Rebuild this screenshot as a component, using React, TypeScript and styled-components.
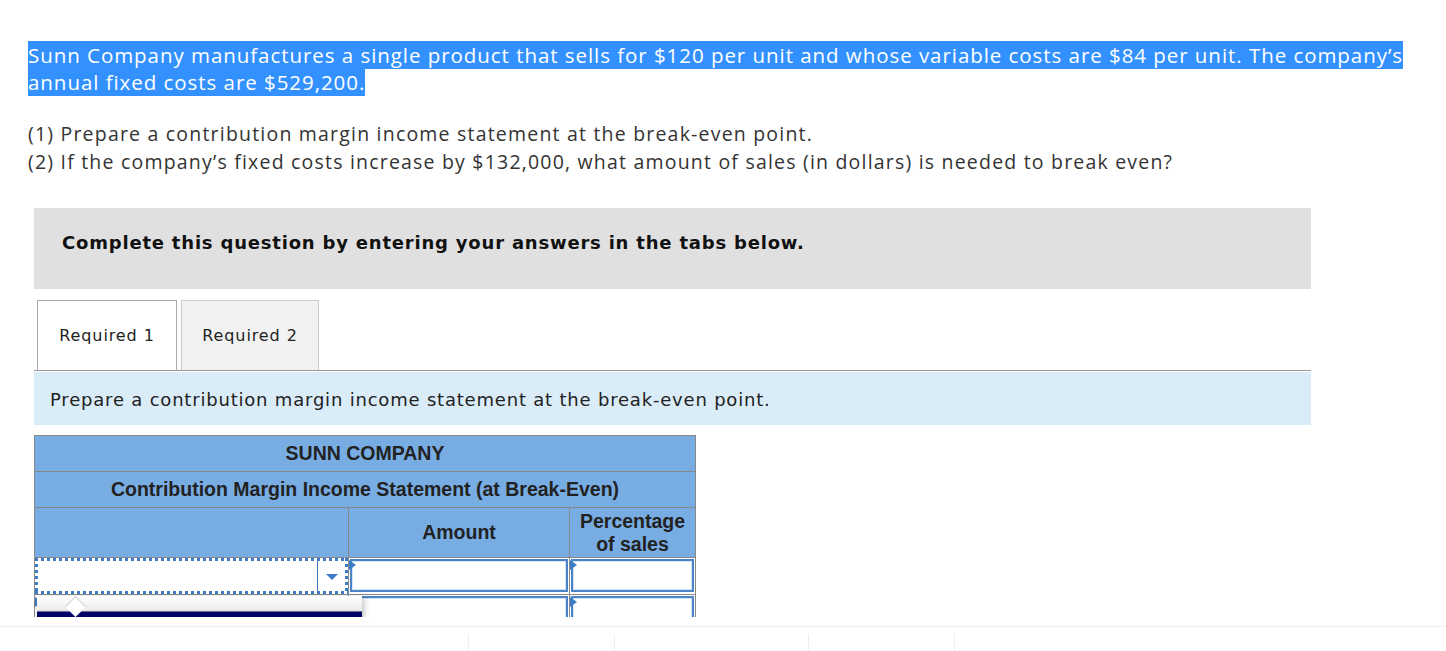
import React from 'react';
import styled, { createGlobalStyle } from 'styled-components';

const GlobalStyle = createGlobalStyle`
  html, body {
    margin: 0;
    padding: 0;
    background: #fff;
  }
`;

const Page = styled.div`
  width: 1446px;
  height: 651px;
  display: flex;
  flex-direction: column;
  overflow: hidden;
`;

const Scroller = styled.div`
  height: 617px;
  overflow: hidden;
  padding: 42px 0 0 28px;
  box-sizing: border-box;
`;

const Question = styled.p`
  margin: 0;
  font-family: 'Open Sans', 'Liberation Sans', sans-serif;
  font-size: 20.5px;
  letter-spacing: 0.95px;
  line-height: 26.5px;
  color: #fff;
  white-space: nowrap;
`;

const Selected = styled.span`
  background: #3391ff;
`;

const Parts = styled.div`
  margin-top: 25px;
  font-family: 'Open Sans', 'Liberation Sans', sans-serif;
  font-size: 19.5px;
  letter-spacing: 1.2px;
  line-height: 28px;
  color: #333;
  white-space: nowrap;
`;

const Notice = styled.div`
  margin: 32px 0 0 6px;
  width: 1277px;
  height: 81px;
  background: #e0e0e0;
  display: flex;
  align-items: center;
  padding: 0 0 12px 28px;
  box-sizing: border-box;
  font-family: 'DejaVu Sans', Verdana, sans-serif;
  font-weight: bold;
  font-size: 18px;
  letter-spacing: 0.8px;
  color: #111;
`;

const TabBar = styled.div`
  margin: 11px 0 0 6px;
  width: 1277px;
  height: 71px;
  display: flex;
  gap: 4px;
  padding-left: 3px;
  box-sizing: border-box;
  border-bottom: 1px solid #999;
`;

const Tab = styled.div<{ $active?: boolean }>`
  width: ${({ $active }) => ($active ? '140px' : '138px')};
  height: 70px;
  box-sizing: border-box;
  border: 1px solid ${({ $active }) => ($active ? '#aaa' : '#ccc')};
  border-bottom: none;
  background: ${({ $active }) => ($active ? '#fff' : '#f2f2f2')};
  display: flex;
  align-items: center;
  justify-content: center;
  font-family: 'DejaVu Sans', Verdana, sans-serif;
  font-size: 16px;
  letter-spacing: 0.9px;
  color: #222;
`;

const Instruction = styled.div`
  margin: 1px 0 0 6px;
  width: 1277px;
  height: 53px;
  background: #dbecf9;
  display: flex;
  align-items: center;
  padding: 2px 0 0 16px;
  box-sizing: border-box;
  font-family: 'DejaVu Sans', Verdana, sans-serif;
  font-size: 18px;
  letter-spacing: 0.8px;
  color: #222;
`;

const Sheet = styled.table`
  margin: 10px 0 0 6px;
  width: 661px;
  border-collapse: collapse;
  table-layout: fixed;
  font-family: 'Liberation Sans', Arial, sans-serif;
`;

const HeadCell = styled.td<{ $h: number }>`
  height: ${({ $h }) => $h}px;
  padding: 0;
  border: 1px solid #888;
  background: #78ade4;
  text-align: center;
  font-weight: bold;
  font-size: 19.5px;
  line-height: 23px;
  color: #222;
`;

const BodyCell = styled.td`
  height: 36px;
  padding: 1px;
  border: 1px solid #888;
  background: #fff;
  position: relative;
  box-sizing: border-box;
  vertical-align: top;
`;

const Marker = styled.span`
  position: absolute;
  top: 2px;
  left: 0;
  width: 0;
  height: 0;
  border-top: 5px solid transparent;
  border-bottom: 5px solid transparent;
  border-left: 7px solid #3d7cc6;
  z-index: 2;
`;

const Field = styled.div`
  height: 33px;
  box-sizing: border-box;
  border: 2px solid #4a84c6;
  box-shadow: inset 0 0 0 1px #d5e4f4;
  background: #fff;
`;

const Select = styled.div`
  height: 36px;
  margin: -1px;
  box-sizing: border-box;
  padding: 3px;
  display: flex;
  background:
    repeating-linear-gradient(90deg, #3d7cc6 0 3px, transparent 3px 6px) top left / 100% 3px no-repeat,
    repeating-linear-gradient(90deg, #3d7cc6 0 3px, transparent 3px 6px) bottom left / 100% 3px no-repeat,
    repeating-linear-gradient(180deg, #3d7cc6 0 3px, transparent 3px 6px) top left / 3px 100% no-repeat,
    repeating-linear-gradient(180deg, #3d7cc6 0 3px, transparent 3px 6px) top right / 3px 100% no-repeat,
    #fff;
`;

const SelectBody = styled.div`
  flex: 1;
`;

const SelectButton = styled.div`
  width: 27px;
  border-left: 1px solid #3d7cc6;
  display: flex;
  align-items: center;
  justify-content: center;
  &::after {
    content: '';
    border-left: 6px solid transparent;
    border-right: 6px solid transparent;
    border-top: 6px solid #3d7cc6;
    margin-top: 2px;
  }
`;

const Popup = styled.div`
  position: absolute;
  top: 1px;
  left: 2px;
  width: 325px;
  height: 40px;
  z-index: 3;
  box-shadow: 2px 2px 6px rgba(0, 0, 0, 0.25);
  background: linear-gradient(#fff, #ececec 14px, #d6d6d6 15px, #000066 16px);
  &::before {
    content: '';
    position: absolute;
    top: 3px;
    left: 31px;
    width: 14px;
    height: 14px;
    background: #fff;
    border-top: 1px solid #ccc;
    border-left: 1px solid #ccc;
    transform: rotate(45deg);
  }
`;

const Footer = styled.div`
  margin-top: 9px;
  border-top: 1px solid #eee;
  flex: 1;
  display: flex;
  padding: 7px 0 0 468px;
`;

const FooterItem = styled.div<{ $w: number }>`
  width: ${({ $w }) => $w}px;
  box-sizing: border-box;
  border-left: 1px solid #eee;
`;

export default function App() {
  return (
    <Page>
      <GlobalStyle />
      <Scroller>
        <Question>
          <Selected>
            Sunn Company manufactures a single product that sells for $120 per unit and whose variable costs are $84 per unit. The company’s{' '}
          </Selected>
          <br />
          <Selected>annual fixed costs are $529,200.</Selected>
        </Question>
        <Parts>
          <div>(1) Prepare a contribution margin income statement at the break-even point.</div>
          <div>(2) If the company’s fixed costs increase by $132,000, what amount of sales (in dollars) is needed to break even?</div>
        </Parts>
        <Notice>Complete this question by entering your answers in the tabs below.</Notice>
        <TabBar>
          <Tab $active>Required 1</Tab>
          <Tab>Required 2</Tab>
        </TabBar>
        <Instruction>Prepare a contribution margin income statement at the break-even point.</Instruction>
        <Sheet>
          <colgroup>
            <col style={{ width: 314 }} />
            <col style={{ width: 221 }} />
            <col style={{ width: 126 }} />
          </colgroup>
          <tbody>
            <tr>
              <HeadCell $h={35} colSpan={3}>SUNN COMPANY</HeadCell>
            </tr>
            <tr>
              <HeadCell $h={35} colSpan={3}>Contribution Margin Income Statement (at Break-Even)</HeadCell>
            </tr>
            <tr>
              <HeadCell $h={49} />
              <HeadCell $h={49}>Amount</HeadCell>
              <HeadCell $h={49}>
                Percentage
                <br />
                of sales
              </HeadCell>
            </tr>
            <tr>
              <BodyCell>
                <Select>
                  <SelectBody />
                  <SelectButton />
                </Select>
              </BodyCell>
              <BodyCell>
                <Marker />
                <Field />
              </BodyCell>
              <BodyCell>
                <Marker />
                <Field />
              </BodyCell>
            </tr>
            <tr>
              <BodyCell>
                <Marker />
                <Popup />
              </BodyCell>
              <BodyCell>
                <Marker />
                <Field />
              </BodyCell>
              <BodyCell>
                <Marker />
                <Field />
              </BodyCell>
            </tr>
          </tbody>
        </Sheet>
      </Scroller>
      <Footer>
        <FooterItem $w={146} />
        <FooterItem $w={194} />
        <FooterItem $w={146} />
        <FooterItem $w={146} />
      </Footer>
    </Page>
  );
}
